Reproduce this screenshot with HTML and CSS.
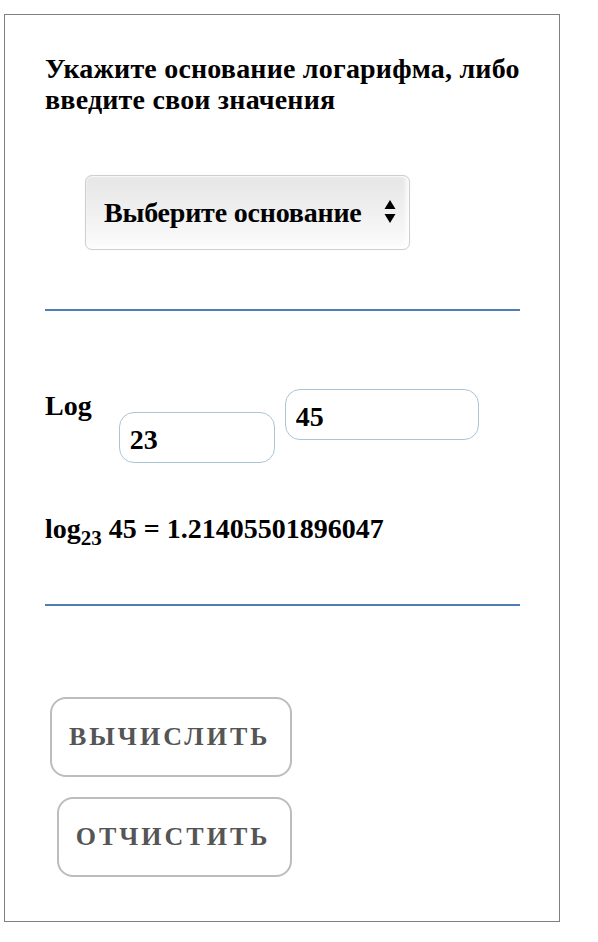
FILE: index.html
```html
<!DOCTYPE html>
<html lang="ru">
<head>
<meta charset="utf-8">
<title>Логарифм</title>
<link rel="stylesheet" href="styles.css">
</head>
<body>
<div class="calc">
  <h2 class="calc-title">Укажите основание логарифма, либо введите свои значения</h2>

  <div class="base-select">
    <select class="base-select__control">
      <option>Выберите основание</option>
      <option>2</option>
      <option>10</option>
      <option>e</option>
    </select>
    <svg class="base-select__arrows" width="12" height="26" viewBox="0 0 12 26">
      <path d="M6 1 L11.5 10 L0.5 10 Z" fill="#000"/>
      <path d="M0.5 15 L11.5 15 L6 24 Z" fill="#000"/>
    </svg>
  </div>

  <hr class="divider divider--top">

  <div class="log-row">
    <span class="log-label">Log</span>
    <input class="log-input log-input--base" type="text" value="23">
    <input class="log-input log-input--arg" type="text" value="45">
  </div>

  <p class="result">log<sub>23</sub> 45 = 1.21405501896047</p>

  <hr class="divider divider--bottom">

  <div class="actions">
    <button class="action-btn" type="button">Вычислить</button>
    <button class="action-btn" type="button">Отчистить</button>
  </div>
</div>
</body>
</html>
```

FILE: styles.css
```css
html, body {
  margin: 0;
  padding: 0;
  background: #fff;
}

body {
  font-family: "Liberation Serif", "Times New Roman", serif;
  color: #000;
}

.calc {
  box-sizing: border-box;
  width: 556px;
  height: 908px;
  margin: 14px 0 0 4px;
  padding: 38px 39px 0 40px;
  border: 1px solid #808080;
  display: flex;
  flex-direction: column;
  align-items: flex-start;
}

.calc-title {
  margin: 0;
  font-size: 28px;
  line-height: 31px;
  font-weight: bold;
  letter-spacing: 0.2px;
}

/* base picker */
.base-select {
  position: relative;
  margin: 60px 0 0 40px;
}

.base-select__control {
  appearance: none;
  -webkit-appearance: none;
  box-sizing: border-box;
  width: 325px;
  height: 75px;
  padding: 0 40px 0 18px;
  border: 1px solid #cfcfcf;
  border-radius: 7px;
  background: linear-gradient(to bottom, #e6e6e6 0%, #efefef 45%, #fcfcfc 100%);
  box-shadow: inset -3px -2px 4px rgba(255, 255, 255, 0.9), inset 0 1px 2px rgba(255, 255, 255, 0.8), 0 0 1px rgba(0, 0, 0, 0.15);
  font-family: inherit;
  font-size: 28px;
  font-weight: bold;
  letter-spacing: -0.2px;
  color: #000;
  outline: none;
}

.base-select__arrows {
  position: absolute;
  right: 14px;
  top: 24px;
  pointer-events: none;
}

/* separators */
.divider {
  align-self: stretch;
  height: 2px;
  margin: 0;
  border: 0;
  background: #4f7db6;
}

.divider--top {
  margin-top: 59px;
}

.divider--bottom {
  margin-top: 60px;
}

/* log(base, value) inputs */
.log-row {
  display: flex;
  align-items: flex-start;
  margin-top: 78px;
}

.log-label {
  margin-top: 2px;
  font-size: 28px;
  line-height: 30px;
  font-weight: bold;
}

.log-input {
  box-sizing: border-box;
  height: 51px;
  padding: 4px 10px 0;
  border: 1px solid #a9c5d6;
  border-radius: 15px;
  font-family: inherit;
  font-size: 28px;
  font-weight: bold;
  color: #000;
  background: #fff;
  outline: none;
}

.log-input--base {
  width: 156px;
  margin: 23px 0 0 27px;
}

.log-input--arg {
  width: 194px;
  margin-left: 10px;
}

.result {
  margin: 51px 0 0;
  font-size: 28px;
  line-height: 30px;
  font-weight: bold;
  letter-spacing: 0;
}

.result sub {
  font-size: 21px;
  line-height: 0;
  vertical-align: -7px;
}

/* buttons */
.actions {
  display: flex;
  flex-direction: column;
  align-items: flex-end;
  gap: 20px;
  margin: 91px 0 0 5px;
}

.action-btn {
  box-sizing: border-box;
  height: 80px;
  padding: 0 20px 0 17px;
  border: 2px solid #bdbdbd;
  border-radius: 16px;
  background: #fff;
  font-family: inherit;
  font-size: 26px;
  font-weight: bold;
  letter-spacing: 3px;
  text-transform: uppercase;
  color: #555;
}
```
